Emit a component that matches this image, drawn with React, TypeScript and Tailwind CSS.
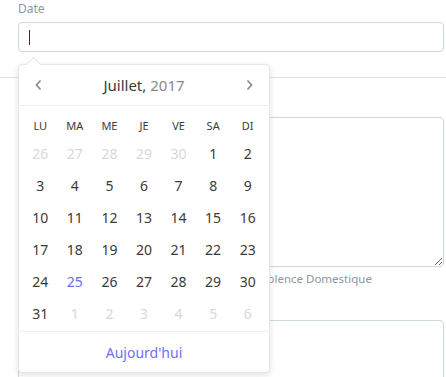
import React from "react";

const weeks: { d: number; muted?: boolean; today?: boolean }[][] = [
  [{ d: 26, muted: true }, { d: 27, muted: true }, { d: 28, muted: true }, { d: 29, muted: true }, { d: 30, muted: true }, { d: 1 }, { d: 2 }],
  [{ d: 3 }, { d: 4 }, { d: 5 }, { d: 6 }, { d: 7 }, { d: 8 }, { d: 9 }],
  [{ d: 10 }, { d: 11 }, { d: 12 }, { d: 13 }, { d: 14 }, { d: 15 }, { d: 16 }],
  [{ d: 17 }, { d: 18 }, { d: 19 }, { d: 20 }, { d: 21 }, { d: 22 }, { d: 23 }],
  [{ d: 24 }, { d: 25, today: true }, { d: 26 }, { d: 27 }, { d: 28 }, { d: 29 }, { d: 30 }],
  [{ d: 31 }, { d: 1, muted: true }, { d: 2, muted: true }, { d: 3, muted: true }, { d: 4, muted: true }, { d: 5, muted: true }, { d: 6, muted: true }],
];

const dayNames = ["LU", "MA", "ME", "JE", "VE", "SA", "DI"];

function DatePicker() {
  return (
    <div className="absolute left-[18px] top-[64px] w-[252px] h-[309px] bg-white border border-[#e4e6e8] rounded-[4px] shadow-[0_2px_6px_rgba(0,0,0,0.12)] flex flex-col">
      {/* arrow */}
      <div className="absolute -top-[6px] left-[9px] w-[11px] h-[11px] rotate-45 bg-white border-l border-t border-[#e4e6e8]" />

      {/* Header */}
      <div className="relative h-[41px] flex items-center justify-between px-[15px] border-b border-[#eceeef]">
        <svg width="9" height="12" viewBox="0 0 9 12" fill="none">
          <path d="M6.5 1.5 L2.5 6 L6.5 10.5" stroke="#8c8c8c" strokeWidth="1.8" />
        </svg>
        <div className="text-[15px] text-[#3a3a3a]">
          Juillet, <span className="text-[#8a8a8a]">2017</span>
        </div>
        <svg width="9" height="12" viewBox="0 0 9 12" fill="none">
          <path d="M2.5 1.5 L6.5 6 L2.5 10.5" stroke="#8c8c8c" strokeWidth="1.8" />
        </svg>
      </div>

      {/* Grid */}
      <div className="px-[4px] pt-[8px] flex-1">
        <div className="grid grid-cols-7 h-[24px] items-center">
          {dayNames.map((n) => (
            <div key={n} className="text-center text-[11px] text-[#3a3a3a]">
              {n}
            </div>
          ))}
        </div>
        {weeks.map((w, i) => (
          <div key={i} className="grid grid-cols-7 h-[32px] items-center">
            {w.map((c, j) => (
              <div
                key={j}
                className={
                  "text-center text-[14px] leading-[20px] " +
                  (c.muted ? "text-[#d8d8d8]" : c.today ? "text-[#6c6cf0]" : "text-[#3a3a3a]")
                }
              >
                {c.d}
              </div>
            ))}
          </div>
        ))}
      </div>

      {/* Footer */}
      <div className="h-[41px] border-t border-[#eceeef] flex items-center justify-center text-[14px] text-[#6f6ff5]">
        Aujourd'hui
      </div>
    </div>
  );
}

export default function App() {
  return (
    <div
      className="relative w-[446px] h-[377px] overflow-hidden bg-white"
      style={{ fontFamily: '"Noto Sans", "Open Sans", sans-serif' }}
    >
      {/* Date field */}
      <div className="pl-[18px] pr-[2px] pt-[1px] pb-[25px] border-b border-[#dde2e6]">
        <div className="text-[12px] leading-[16px] text-[#8a96a3] mb-[5px]">Date</div>
        <div className="h-[30px] border border-[#ced6de] rounded-[4px] flex items-center pl-[10px]">
          <div className="w-[1px] h-[15px] bg-[#333]" />
        </div>
      </div>

      {/* Description field */}
      <div className="pl-[18px] pr-[2px] pt-[13px]">
        <div className="text-[12px] leading-[16px] text-[#8a96a3] mb-[10px]">Description</div>
        <textarea className="block w-full h-[150px] border border-[#ced6de] rounded-[4px] outline-none" />
        <div className="text-[11.5px] leading-[16px] text-[#8a96a3] mt-[4px] pl-[215px]">
          Ex. : Violence Domestique
        </div>
        <div className="text-[12px] leading-[16px] text-[#8a96a3] mt-[10px]">Commentaire</div>
        <textarea className="block w-full h-[100px] mt-[7px] border border-[#ced6de] rounded-[4px] outline-none" />
      </div>

      <DatePicker />
    </div>
  );
}
